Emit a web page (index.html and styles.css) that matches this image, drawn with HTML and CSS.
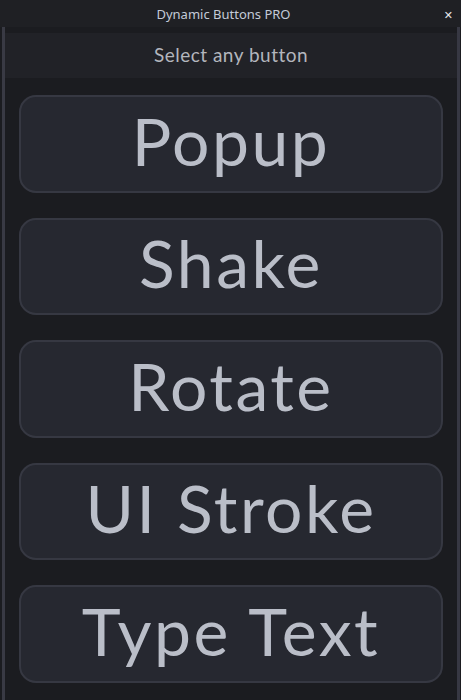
FILE: index.html
```html
<!DOCTYPE html>
<html>
<head>
<meta charset="utf-8">
<link rel="stylesheet" href="styles.css">
</head>
<body>
<div class="titlebar">
  <span></span>
  <span class="title">Dynamic Buttons PRO</span>
  <span class="close">✕</span>
</div>
<div class="frame">
  <div class="rail rail-left"></div>
  <main class="panel">
    <div class="header">Select any button</div>
    <div class="list">
      <button class="btn">Popup</button>
      <button class="btn">Shake</button>
      <button class="btn">Rotate</button>
      <button class="btn">UI Stroke</button>
      <button class="btn">Type Text</button>
    </div>
  </main>
  <div class="rail rail-right"></div>
</div>
</body>
</html>
```
FILE: styles.css
```css
html, body {
  margin: 0;
  padding: 0;
  background: #1b1c20;
  height: 100%;
  overflow: hidden;
}
.titlebar {
  height: 27px;
  background: #1f2024;
  display: grid;
  grid-template-columns: 1fr auto 1fr;
  align-items: center;
}
.title {
  font-family: "Noto Sans", sans-serif;
  font-size: 13px;
  color: #c4cbd8;
  padding-top: 1px;
  margin-right: 14px;
}
.close {
  justify-self: end;
  margin-right: 8px;
  font-family: "DejaVu Sans", sans-serif;
  font-size: 11px;
  font-weight: bold;
  color: #e6e8ec;
  padding-top: 3px;
}
.frame {
  display: flex;
  height: 673px;
  padding-left: 2px;
  padding-right: 1px;
}
.rail {
  flex: 0 0 auto;
}
.rail-left {
  width: 3px;
  background: #393a44;
}
.rail-right {
  width: 3px;
  background: #373843;
}
.panel {
  flex: 1;
  padding-top: 6px;
}
.header {
  height: 45px;
  background: #212227;
  display: flex;
  align-items: center;
  justify-content: center;
  font-family: Lato, sans-serif;
  font-size: 19px;
  letter-spacing: 0.5px;
  color: #b3b6bd;
  padding-bottom: 2px;
  box-sizing: border-box;
}
.list {
  display: flex;
  flex-direction: column;
  gap: 25px;
  padding: 17px 14px 0;
}
.btn {
  height: 97.5px;
  box-sizing: border-box;
  border: 2px solid #363842;
  border-radius: 17px;
  background: #262830;
  color: #babec8;
  font-family: Lato, sans-serif;
  font-size: 66px;
  font-weight: 400;
  letter-spacing: 2.5px;
  padding: 0 0 7px;
  display: flex;
  align-items: center;
  justify-content: center;
}
```
